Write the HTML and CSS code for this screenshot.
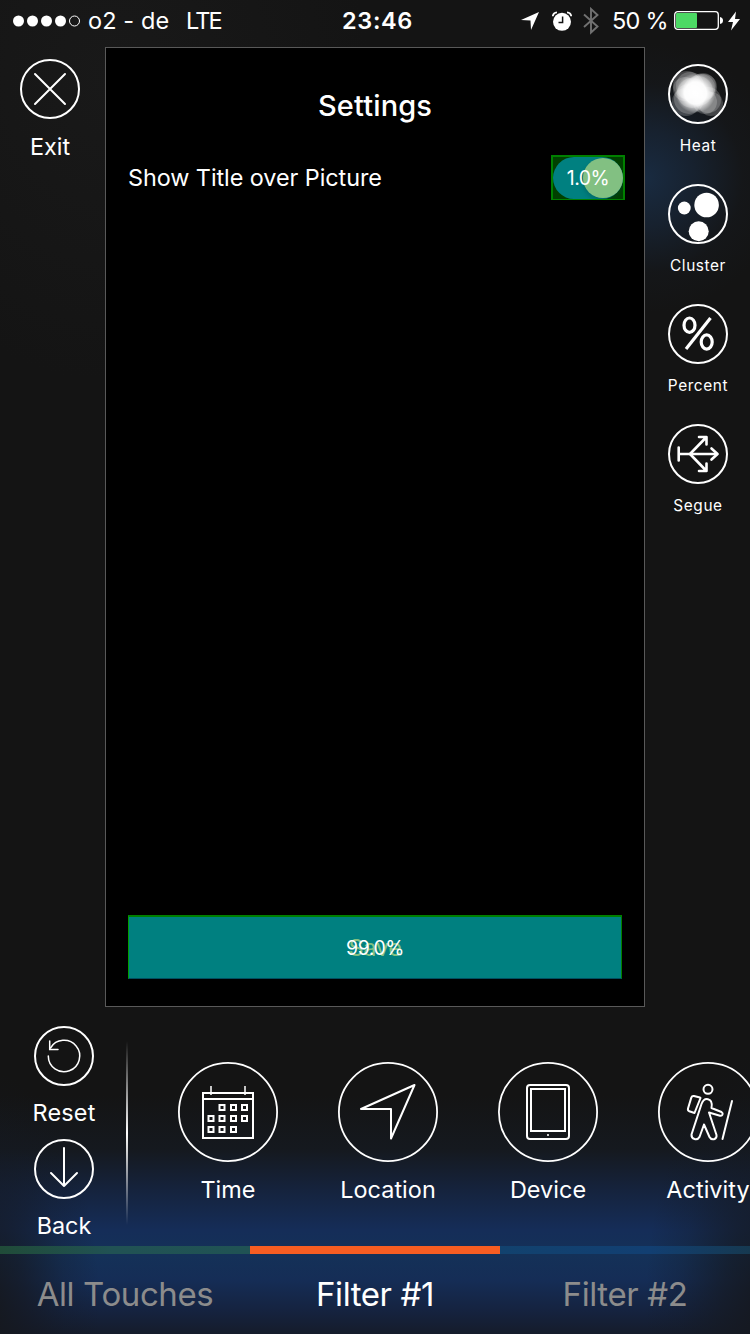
FILE: index.html
```html
<!DOCTYPE html>
<html lang="en">
<head>
<meta charset="utf-8">
<title>Touch Filters</title>
<link rel="stylesheet" href="styles.css">
</head>
<body>
<div class="screen">
  <header class="status">
    <div class="status-left">
      <svg class="signal" width="68" height="12" viewBox="0 0 68 12"><g fill="#fff"><circle cx="5.5" cy="6" r="5.5"/><circle cx="19.5" cy="6" r="5.5"/><circle cx="33.5" cy="6" r="5.5"/><circle cx="47.5" cy="6" r="5.5"/></g><circle cx="61.5" cy="6" r="5" fill="none" stroke="#fff"/></svg>
      <span class="carrier">o2 - de</span><span class="network">LTE</span>
    </div>
    <div class="clock">23:46</div>
    <div class="status-right">
      <svg width="18" height="18" viewBox="0 0 18 18"><path d="M0 8 18 0 10 18 9.5 8.5Z" fill="#fff"/></svg>
      <svg class="alarm" width="20" height="20" viewBox="0 0 20 20"><circle cx="10" cy="10.8" r="9" fill="#fff"/><path d="M10.6 5.5v6H6.5" fill="none" stroke="#141414" stroke-width="1.5"/><path d="M.8 5.3Q1 1.8 5 1.3M19.2 5.3Q19 1.8 15 1.3" fill="none" stroke="#fff" stroke-width="1.8"/></svg>
      <svg class="bluetooth" width="16" height="28" viewBox="0 0 16 28"><path d="M1 7.5 14.5 19.5 8 25.5V2l6.5 6L1 20" fill="none" stroke="#717171" stroke-width="1.9"/></svg>
      <span class="charge">50 %</span>
      <svg class="battery" width="49" height="19" viewBox="0 0 49 19"><rect x=".7" y=".7" width="43.6" height="17.6" rx="3" fill="none" stroke="#fff" stroke-width="1.3"/><rect x="2" y="2" width="21" height="15" rx="1" fill="#4cd964"/><path d="M46 6q3 .5 3 3.500t-3 3.500z" fill="#fff"/></svg>
      <svg class="bolt" width="12" height="20" viewBox="0 0 12 20"><path d="M8 .5 0 11h5L3 19.500 12 8H7Z" fill="#fff"/></svg>
    </div>
  </header>

  <main class="stage">
    <aside class="rail rail-left">
      <div class="tool">
        <svg width="60" height="60" viewBox="0 0 60 60" class="line"><circle cx="30" cy="30" r="29"/><path d="m15 15 30 30M45 15 15 45"/></svg>
        <span class="label">Exit</span>
      </div>
    </aside>

    <section class="preview">
      <h1 class="title">Settings</h1>
      <div class="setting">
        <span class="setting-name">Show Title over Picture</span>
        <div class="toggle"><div class="track"><i class="knob"></i></div><span class="rate rate-toggle">1.0%</span></div>
      </div>
      <div class="save"><span class="save-text">Save</span><span class="rate">99.0%</span></div>
    </section>

    <aside class="rail rail-right">
      <div class="mode">
        <svg width="60" height="60" viewBox="0 0 60 60"><defs><clipPath id="disc"><circle cx="30" cy="30" r="28"/></clipPath><radialGradient id="core"><stop offset="0" stop-color="#fff"/><stop offset=".55" stop-color="#fff" stop-opacity=".95"/><stop offset="1" stop-color="#fff" stop-opacity="0"/></radialGradient></defs>
          <g clip-path="url(#disc)"><g fill="#fff" fill-opacity=".2"><circle cx="19" cy="21" r="14"/><circle cx="17" cy="25" r="12"/><circle cx="22" cy="22" r="14"/><circle cx="18" cy="38" r="14"/><circle cx="21" cy="35" r="15"/><circle cx="43" cy="40" r="12"/><circle cx="40" cy="36" r="13"/><circle cx="37" cy="38" r="12"/><circle cx="35" cy="22" r="13"/><circle cx="36" cy="23" r="13"/><circle cx="33" cy="24" r="14"/><circle cx="30" cy="27" r="15"/><circle cx="24" cy="29" r="15"/></g><circle cx="27.500" cy="29" r="20" fill="url(#core)"/></g>
          <circle cx="30" cy="30" r="29" fill="none" stroke="#fff" stroke-width="2"/></svg>
        <span class="small">Heat</span>
      </div>
      <div class="mode">
        <svg width="60" height="60" viewBox="0 0 60 60"><circle cx="30" cy="30" r="29" fill="none" stroke="#fff" stroke-width="2"/><g fill="#fff"><circle cx="16.300" cy="24" r="6.400"/><circle cx="38.600" cy="21" r="12.300"/><circle cx="30.700" cy="47.300" r="10"/></g></svg>
        <span class="small">Cluster</span>
      </div>
      <div class="mode">
        <svg width="60" height="60" viewBox="0 0 60 60" class="line"><circle cx="30" cy="30" r="29"/><g stroke-width="3.200"><ellipse cx="21.500" cy="21.200" rx="5.500" ry="7.200"/><ellipse cx="38.700" cy="38" rx="5.500" ry="7.200"/><path d="M42.500 14 18 45" stroke-linecap="butt"/></g></svg>
        <span class="small">Percent</span>
      </div>
      <div class="mode">
        <svg width="60" height="60" viewBox="0 0 60 60" class="line"><circle cx="30" cy="30" r="29"/><g stroke-width="2.600"><path d="M10.700 23.500v13M11 30h38" /><path d="m43.500 24.500 6 5.500-6 5.500M22 30 38 13.500M31 13h7.500v7.500M22 30l16 16.500M31 47h7.500v-7.500"/></g></svg>
        <span class="small">Segue</span>
      </div>
    </aside>
  </main>

  <section class="filters">
    <div class="actions">
      <div class="action">
        <svg width="60" height="60" viewBox="0 0 60 60" class="line"><circle cx="30" cy="30" r="29"/><g stroke-width="1.500"><path d="M14.300 30A15.700 15.700 0 1 0 16.500 22"/><path d="M15.700 15v8.500H24" stroke-linejoin="miter"/></g></svg>
        <span class="label reset">Reset</span>
      </div>
      <div class="action">
        <svg width="60" height="60" viewBox="0 0 60 60" class="line"><circle cx="30" cy="30" r="29"/><path d="M30 9v38M17 34l13 13 13-13"/></svg>
        <span class="label">Back</span>
      </div>
    </div>
    <i class="divider"></i>
    <div class="kinds">
      <div class="kind">
        <svg width="100" height="100" viewBox="0 0 100 100" class="line"><circle cx="50" cy="50" r="49.100" stroke-width="1.800"/><g stroke-linecap="butt" stroke-linejoin="miter"><path d="M25 31h50V76H25zM25 37h50"/><path d="M33 24v9M67 24v9" stroke-width="1.500"/><path d="M41.500 43h5v5h-5zM53 43h5v5h-5zM64 43h5v5h-5zM30.500 54h5v5h-5zM41.500 54h5v5h-5zM53 54h5v5h-5zM64 54h5v5h-5zM30.500 65h5v5h-5zM41.500 65h5v5h-5zM53 65h5v5h-5z"/></g></svg>
        <span class="label">Time</span>
      </div>
      <div class="kind">
        <svg width="100" height="100" viewBox="0 0 100 100" class="line"><circle cx="50" cy="50" r="49.100" stroke-width="1.800"/><path d="M23 47 76.500 23 53 76.500V47Z"/></svg>
        <span class="label">Location</span>
      </div>
      <div class="kind">
        <svg width="100" height="100" viewBox="0 0 100 100" class="line"><circle cx="50" cy="50" r="49.100" stroke-width="1.800"/><rect x="29" y="23" width="42" height="54" rx="3"/><path d="M33 27h34v42H33z" stroke-linejoin="miter"/><rect x="49" y="72" width="2" height="2" fill="#ccc" stroke="none"/></svg>
        <span class="label">Device</span>
      </div>
      <div class="kind">
        <svg width="100" height="100" viewBox="0 0 100 100" class="line"><circle cx="50" cy="50" r="49.100" stroke-width="1.800"/><circle cx="50" cy="27.300" r="4.500"/><path d="M42 35.500 36 34q-2-.4-2.700 1.600L30 46.500q-.5 2 1.300 2.700L36.500 51 42.500 36M33.500 72.500 43.500 42C45 38 47 36.500 50 37.200S54.500 41 53.500 46L63.500 50q1.700 1.200 1 2.700t-2.500 1L51 50.500 58.500 73q.5 3.500-2.500 4.200T51.500 75L46 62.500 41.500 75q-1.700 3-5 2t-3-4.500M74 39 64.500 77"/></svg>
        <span class="label">Activity</span>
      </div>
    </div>
  </section>

  <nav class="tabs">
    <div class="tab tab-all"><span>All Touches</span></div>
    <div class="tab tab-first"><span>Filter #1</span></div>
    <div class="tab tab-second"><span>Filter #2</span></div>
  </nav>
</div>
</body>
</html>
```
FILE: styles.css
```css
* { box-sizing: border-box; }
body { margin: 0; background: #141414; }
svg { display: block; flex: none; }
.screen {
  width: 750px; height: 1334px; overflow: hidden;
  display: grid; grid-template-rows: 47px 960px 239px 88px;
  color: #fff; font-family: Inter, "Liberation Sans", sans-serif; font-weight: 400;
  background:
    radial-gradient(ellipse 140px 135px at 645px 178px, #192b41 0%, rgba(24,38,56,.75) 35%, rgba(22,27,34,.35) 70%, rgba(20,20,20,0) 100%),
    radial-gradient(ellipse 115px 240px at -15px 1310px, #15181d 0%, rgba(21,24,32,.7) 35%, rgba(20,25,35,.25) 70%, rgba(20,25,35,0) 100%),
    radial-gradient(ellipse 120px 260px at 765px 1310px, #15181f 0%, rgba(21,25,33,.7) 35%, rgba(20,25,35,.25) 70%, rgba(20,25,35,0) 100%),
    linear-gradient(to bottom, transparent 1095px, #15191f 1150px, #15233d 1190px, #152d58 1230px, #143158 1255px, #152d56 1280px, #152340 1310px, #151c2b 1334px),
    radial-gradient(ellipse 260px 300px at 110px 80px, #191919, #141414);
}
.line { fill: none; stroke: #fff; stroke-width: 2; stroke-linecap: round; stroke-linejoin: round; }

.status { display: grid; grid-template-columns: 1fr 80px 1fr; height: 41px; align-items: center; font-size: 23.500px; white-space: pre; }
.status-left { display: flex; align-items: center; padding-left: 13px; }
.carrier { margin-left: 7px; width: 98px; letter-spacing: .1px; }
.network { letter-spacing: -1.900px; }
.clock { text-align: center; font-weight: 600; letter-spacing: .6px; padding-left: 5px; }
.status-right { display: flex; align-items: center; justify-content: flex-end; padding-right: 10px; }
.alarm { margin-left: 13px; }
.bluetooth { margin-left: 11px; }
.charge { margin-left: 13px; width: 62px; letter-spacing: -.7px; }
.battery { margin-right: 5px; }

.stage { display: grid; grid-template-columns: 105px 540px 105px; }
.rail { display: flex; flex-direction: column; align-items: center; }
.rail-left { padding: 12px 5px 0 0; }
.rail-right { padding: 17px 0 0 1px; gap: 20px; }
.tool, .mode, .action, .kind { display: flex; flex-direction: column; align-items: center; }
.mode { height: 100px; }
.label { font-size: 23.400px; line-height: 28px; white-space: nowrap; }
.tool .label { margin-top: 14px; }
.small { font-size: 15.400px; line-height: 18px; margin-top: 13px; letter-spacing: .6px; }

.preview { background: #000; border: 1px solid #595959; display: flex; flex-direction: column; padding: 39px 19px 27px 22px; }
.title { margin: 0 0 0 -3px; font-size: 29px; font-weight: 500; line-height: 38px; text-align: center; letter-spacing: .15px; }
.setting { display: flex; justify-content: space-between; align-items: center; margin-top: 30px; height: 45px; }
.setting-name { font-size: 23.400px; white-space: nowrap; letter-spacing: -.06px; }
.toggle { position: relative; width: 74px; height: 45px; background: #004000; border: 2px solid #008000; border-bottom-width: 1px; overflow: hidden; }
.track { height: 42px; border-radius: 21px; background: #008080; display: flex; justify-content: flex-end; align-items: center; }
.knob { width: 40px; height: 40px; border-radius: 50%; background: #82c082; box-shadow: 0 3px 5px rgba(0,65,65,.35); }
.rate { position: absolute; inset: 0; display: flex; align-items: center; justify-content: center; font-size: 19.500px; letter-spacing: -.5px; }
.save { position: relative; width: 494px; height: 64px; margin-top: auto; background: #008080; border: 1px solid #008000; border-top-width: 2px; border-left-color: #00a000; border-bottom-color: #004f60; display: flex; align-items: center; justify-content: center; }
.save-text { color: #82c082; font-size: 23.500px; letter-spacing: -.3px; }

.filters { display: grid; grid-template-columns: 126px 2px 1fr; overflow: hidden; }
.actions { padding: 19px 0 0 2px; display: flex; flex-direction: column; gap: 12px; }
.action { height: 101px; }
.action .label { margin-top: 13px; }
.reset { letter-spacing: .2px; }
.divider { height: 184px; margin-top: 34px; background: linear-gradient(transparent, #fff 50%, transparent); }
.kinds { display: flex; padding: 55px 0 0 20px; }
.kind { flex: 0 0 160px; }
.kind .label { margin-top: 14px; letter-spacing: .05px; }

.tabs { display: grid; grid-template-columns: repeat(3, 1fr); font-size: 33px; line-height: 80px; text-align: center; white-space: nowrap; letter-spacing: -.4px; }
.tab { border-top: 8px solid; color: #8c8c8c; }
.tab span { display: block; }
.tab-all { border-image: linear-gradient(to right, #204b38, #215254 45%, #205354) 1; }
.tab-first { border-color: #f65d22; }
.tab-first span { color: #fff; }
.tab-second { border-image: linear-gradient(to right, #12426e, #123f72 60%, #163950) 1; }
```
